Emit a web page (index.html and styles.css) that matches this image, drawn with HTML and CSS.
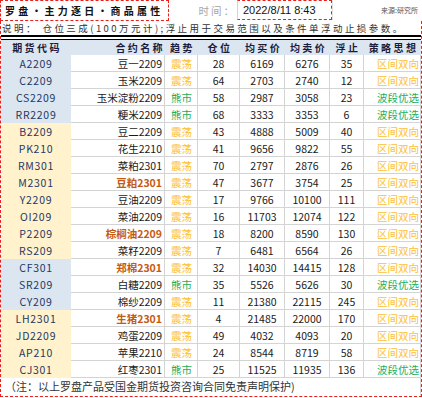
FILE: index.html
```html
<!DOCTYPE html>
<html lang="zh">
<head>
<meta charset="utf-8">
<link rel="stylesheet" href="styles.css">
</head>
<body>
<div class="sheet">
  <div class="top">
    <div class="title">罗盘・主力逐日・商品属性</div>
    <div class="tlabel">时间：</div>
    <div class="date">2022/8/11 8:43</div>
    <div class="src">来源:研究所</div>
  </div>
  <div class="main">
    <div class="note">说明： 仓位三成(100万元计);浮止用于交易范围以及条件单浮动止损参数。</div>
    <div class="rule"></div>
    <div class="grid">
      <div class="h c-code">期货代码</div><div class="h c-name">合约名称</div><div class="h">趋势</div><div class="h">仓位</div><div class="h">均买价</div><div class="h">均卖价</div><div class="h">浮止</div><div class="h">策略思想</div>

      <div class="code blue">A2209</div><div class="name">豆一2209</div><div class="trend y">震荡</div><div class="num">28</div><div class="num">6169</div><div class="num">6276</div><div class="num">35</div><div class="strat y">区间双向</div>
      <div class="code blue">C2209</div><div class="name">玉米2209</div><div class="trend y">震荡</div><div class="num">64</div><div class="num">2703</div><div class="num">2740</div><div class="num">12</div><div class="strat y">区间双向</div>
      <div class="code blue">CS2209</div><div class="name">玉米淀粉2209</div><div class="trend g">熊市</div><div class="num">58</div><div class="num">2987</div><div class="num">3058</div><div class="num">23</div><div class="strat g">波段优选</div>
      <div class="code blue">RR2209</div><div class="name">粳米2209</div><div class="trend g">熊市</div><div class="num">68</div><div class="num">3333</div><div class="num">3353</div><div class="num">6</div><div class="strat g">波段优选</div>
      <div class="code yel">B2209</div><div class="name">豆二2209</div><div class="trend y">震荡</div><div class="num">43</div><div class="num">4888</div><div class="num">5009</div><div class="num">40</div><div class="strat y">区间双向</div>
      <div class="code yel">PK210</div><div class="name">花生2210</div><div class="trend y">震荡</div><div class="num">41</div><div class="num">9656</div><div class="num">9822</div><div class="num">55</div><div class="strat y">区间双向</div>
      <div class="code yel">RM301</div><div class="name">菜粕2301</div><div class="trend y">震荡</div><div class="num">70</div><div class="num">2797</div><div class="num">2876</div><div class="num">26</div><div class="strat y">区间双向</div>
      <div class="code yel">M2301</div><div class="name hot">豆粕2301</div><div class="trend y">震荡</div><div class="num">47</div><div class="num">3677</div><div class="num">3754</div><div class="num">25</div><div class="strat y">区间双向</div>
      <div class="code yel">Y2209</div><div class="name">豆油2209</div><div class="trend y">震荡</div><div class="num">17</div><div class="num">9766</div><div class="num">10100</div><div class="num">111</div><div class="strat y">区间双向</div>
      <div class="code yel">OI209</div><div class="name">菜油2209</div><div class="trend y">震荡</div><div class="num">16</div><div class="num">11703</div><div class="num">12074</div><div class="num">122</div><div class="strat y">区间双向</div>
      <div class="code yel">P2209</div><div class="name hot">棕榈油2209</div><div class="trend y">震荡</div><div class="num">18</div><div class="num">8200</div><div class="num">8590</div><div class="num">130</div><div class="strat y">区间双向</div>
      <div class="code yel">RS209</div><div class="name">菜籽2209</div><div class="trend y">震荡</div><div class="num">7</div><div class="num">6481</div><div class="num">6564</div><div class="num">26</div><div class="strat y">区间双向</div>
      <div class="code blue">CF301</div><div class="name hot">郑棉2301</div><div class="trend y">震荡</div><div class="num">32</div><div class="num">14030</div><div class="num">14415</div><div class="num">128</div><div class="strat y">区间双向</div>
      <div class="code blue">SR209</div><div class="name">白糖2209</div><div class="trend g">熊市</div><div class="num">35</div><div class="num">5526</div><div class="num">5626</div><div class="num">30</div><div class="strat g">波段优选</div>
      <div class="code blue">CY209</div><div class="name">棉纱2209</div><div class="trend y">震荡</div><div class="num">11</div><div class="num">21380</div><div class="num">22115</div><div class="num">245</div><div class="strat y">区间双向</div>
      <div class="code yel">LH2301</div><div class="name hot">生猪2301</div><div class="trend y">震荡</div><div class="num">4</div><div class="num">21485</div><div class="num">22000</div><div class="num">170</div><div class="strat y">区间双向</div>
      <div class="code yel">JD2209</div><div class="name">鸡蛋2209</div><div class="trend y">震荡</div><div class="num">49</div><div class="num">4032</div><div class="num">4093</div><div class="num">20</div><div class="strat y">区间双向</div>
      <div class="code yel">AP210</div><div class="name">苹果2210</div><div class="trend y">震荡</div><div class="num">24</div><div class="num">8544</div><div class="num">8719</div><div class="num">58</div><div class="strat y">区间双向</div>
      <div class="code yel">CJ301</div><div class="name">红枣2301</div><div class="trend g">熊市</div><div class="num">25</div><div class="num">11525</div><div class="num">11935</div><div class="num">136</div><div class="strat g">波段优选</div>
    </div>
    <div class="foot">（注：以上罗盘产品受国金期货投资咨询合同免责声明保护)</div>
  </div>
</div>
</body>
</html>
```

FILE: styles.css
```css
html, body {
  margin: 0;
  padding: 0;
  background: #ffffff;
}

.sheet {
  width: 422px;
  font-family: "Noto Sans CJK SC", "Noto Sans", sans-serif;
  color: #1a1a1a;
}

.top {
  display: flex;
  height: 21px;
}

.title {
  box-sizing: border-box;
  width: 169px;
  height: 21px;
  border: 1px dashed #e8201c;
  padding-left: 4px;
  display: flex;
  align-items: center;
  font-size: 10px;
  font-weight: 700;
  letter-spacing: 3.2px;
  white-space: nowrap;
  color: #111111;
}

.tlabel {
  width: 68px;
  height: 20px;
  display: flex;
  align-items: center;
  justify-content: flex-end;
  padding-right: 1px;
  box-sizing: border-box;
  font-size: 10.5px;
  letter-spacing: 2px;
  color: #a6a6a6;
}

.date {
  box-sizing: border-box;
  width: 95px;
  height: 20px;
  border: 1px dashed #e8201c;
  border-left: 1px solid #d4d4d4;
  padding-left: 5px;
  display: flex;
  align-items: center;
  font-family: "Liberation Sans", Arial, sans-serif;
  font-size: 11px;
  color: #111111;
}

.src {
  flex: 1;
  height: 20px;
  display: flex;
  align-items: center;
  justify-content: flex-end;
  padding-right: 4px;
  font-size: 7px;
  color: #555555;
  border-left: 1px solid #e0e0e0;
}

.main {
  box-sizing: border-box;
  width: 422px;
  border: 1px dashed #e8201c;
  border-top: none;
}

.note {
  height: 14px;
  line-height: 14px;
  padding-left: 1px;
  font-size: 9.5px;
  letter-spacing: 2.45px;
  white-space: nowrap;
  overflow: hidden;
  color: #333333;
}

.rule {
  height: 2px;
  border-top: 2px solid #000000;
  border-bottom: 1px solid #000000;
}

.grid {
  display: grid;
  grid-template-columns: 70px 94px 33px 42px 45px 45px 34px 57px;
  grid-template-rows: 15px repeat(19, 17px);
}

.grid > div {
  box-sizing: border-box;
  display: flex;
  align-items: center;
  white-space: nowrap;
  font-size: 10.5px;
}

.h {
  background: #dce6f1;
  justify-content: center;
  font-size: 10px !important;
  font-weight: 700;
  letter-spacing: 2.4px;
  padding-left: 2px;
  color: #1c1c3c;
}

.h.c-name {
  justify-content: flex-end;
  padding-right: 0;
}

.code {
  justify-content: center;
  letter-spacing: 0.7px;
  color: #1f3864;
}

.blue { background: #dce6f1; }
.yel { background: #fff2cc; }

.name, .trend, .num, .strat {
  border-right: 1px solid #d4d4d4;
  border-bottom: 1px solid #d4d4d4;
}

.name {
  justify-content: flex-end;
  padding-right: 2px;
  color: #1a1a1a;
}

.name.hot {
  color: #c55a11;
  font-weight: 700;
}

.trend {
  padding-left: 6px;
}

.num {
  justify-content: center;
  color: #1a1a1a;
}

.strat {
  justify-content: flex-end;
  padding-right: 1px;
}

.y { color: #fdc133; }
.g { color: #1fae57; }

.foot {
  box-sizing: border-box;
  height: 18px;
  line-height: 17px;
  padding-left: 4px;
  border-right: 1px solid #d4d4d4;
  font-size: 11px;
  color: #333333;
  white-space: nowrap;
}
```
